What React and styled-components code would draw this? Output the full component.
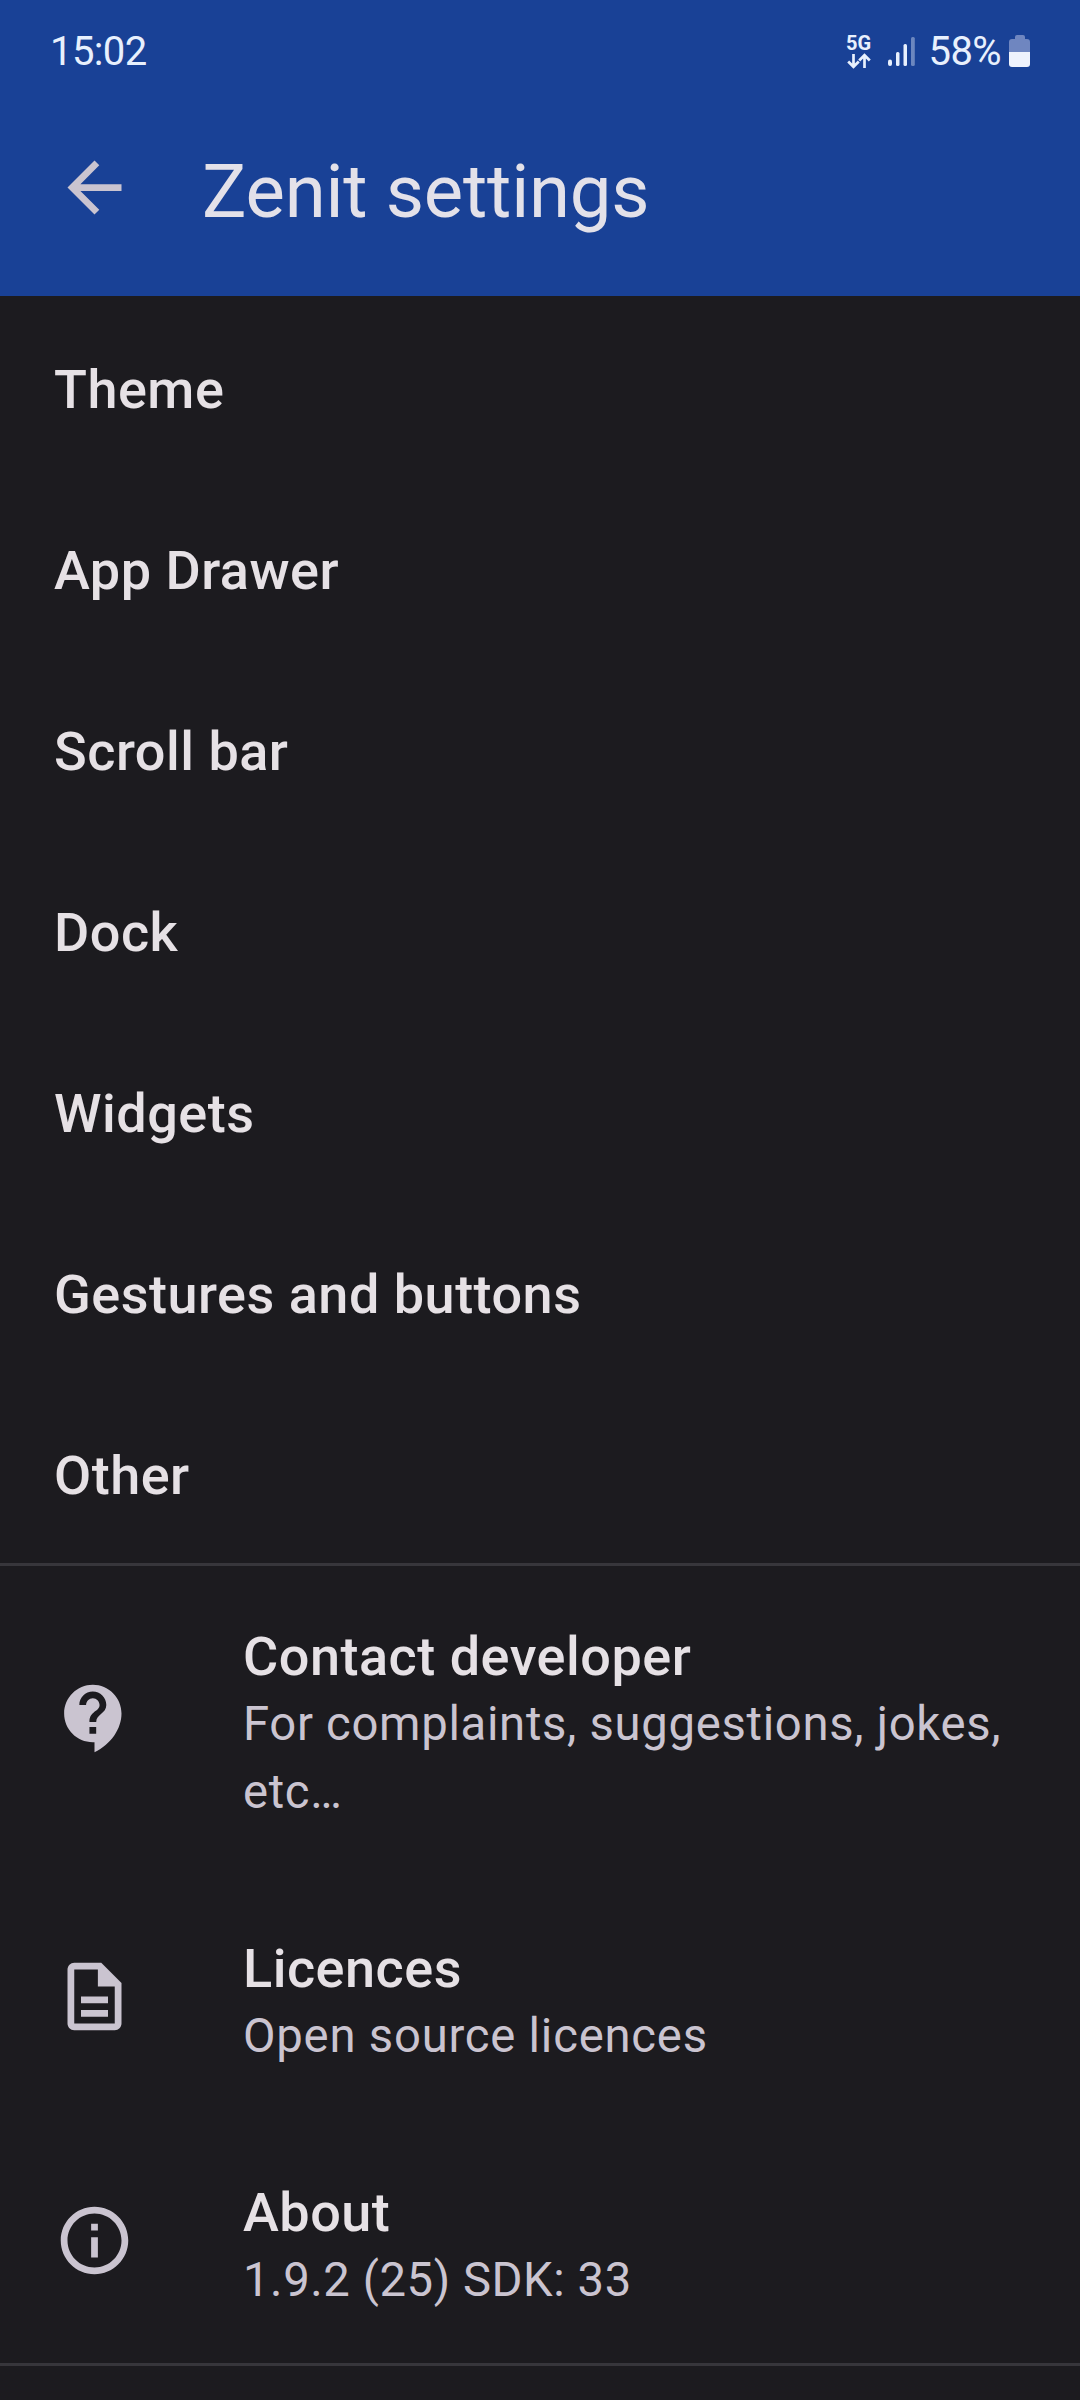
import React from "react";
import styled, { createGlobalStyle } from "styled-components";

const GlobalStyle = createGlobalStyle`
  * { box-sizing: border-box; }
  body {
    margin: 0;
    background: #1c1b1f;
    font-family: Roboto, "Noto Sans", sans-serif;
  }
`;

const Screen = styled.div`
  width: 1080px;
  height: 2400px;
  overflow: hidden;
  display: flex;
  flex-direction: column;
  background: #1c1b1f;
`;

const Header = styled.header`
  height: 296px;
  flex: none;
  background: #194196;
`;

const StatusBar = styled.div`
  height: 103px;
  display: flex;
  justify-content: space-between;
  align-items: center;
  padding: 0 49px 0 50px;
  color: #e8f0fd;
  font-size: 40px;
  line-height: 48px;
`;

const Clock = styled.span`
  letter-spacing: -0.6px;
`;

const StatusGroup = styled.div`
  display: flex;
  align-items: center;
`;

const Percent = styled.span`
  margin: 0 8px 0 13px;
  letter-spacing: -0.6px;
`;

const Network = styled.div`
  display: flex;
  flex-direction: column;
  align-items: center;
  gap: 2px;
  width: 26px;
  margin-right: 16px;
  font-size: 20px;
  font-weight: 700;
  line-height: 16px;
`;

const AppBar = styled.div`
  display: flex;
  align-items: center;
  height: 170px;
  padding-left: 54px;
`;

const Icon = styled.svg`
  width: 81px;
  height: 81px;
  flex: none;
  margin-top: -1px;
  fill: #cac4d0;
`;

const Heading = styled.h1`
  margin: 8px 0 0 67px;
  font-size: 74.25px;
  line-height: 94px;
  font-weight: 400;
  letter-spacing: -0.2px;
  color: #e3e1e9;
`;

const Row = styled.div`
  display: flex;
  align-items: center;
  flex: none;
  height: ${(p) => p.$height}px;
  padding: 0 54px;
`;

const RowText = styled.div`
  display: flex;
  flex-direction: column;
  padding-top: ${(p) => (p.$inset ? 10 : 5)}px;
  margin-left: ${(p) => (p.$inset ? 108 : 0)}px;
`;

const Title = styled.div`
  font-size: 54px;
  line-height: 69px;
  font-weight: 500;
  letter-spacing: 0.5px;
  color: #e6e1e5;
`;

const Summary = styled.div`
  font-size: 47.25px;
  line-height: 67.5px;
  letter-spacing: ${(p) => p.$tracking}px;
  color: #cac4d0;
`;

const Divider = styled.div`
  height: 3px;
  flex: none;
  margin-bottom: -3px;
  background: #37363b;
`;

const sections = ["Theme", "App Drawer", "Scroll bar", "Dock", "Widgets", "Gestures and buttons", "Other"];

const links = [
  {
    title: "Contact developer",
    summary: "For complaints, suggestions, jokes, etc…",
    height: 312,
    tracking: 0.68,
    icon: "M11.5 2C6.81 2 3 5.81 3 10.5S6.81 19 11.5 19h.5v3c4.86-2.34 8-7 8-11.5C20 5.81 16.19 2 11.5 2zm1 14.5h-2v-2h2v2zm0-3.5h-2c0-3.25 3-3 3-5 0-1.1-.9-2-2-2s-2 .9-2 2h-2c0-2.21 1.79-4 4-4s4 1.79 4 4c0 2.5-3 2.75-3 5z",
  },
  {
    title: "Licences",
    summary: "Open source licences",
    height: 244,
    tracking: 0.77,
    icon: "M8 16h8v2H8zm0-4h8v2H8zm6-10H6c-1.1 0-2 .9-2 2v16c0 1.1.89 2 1.99 2H18c1.1 0 2-.9 2-2V8l-6-6zm4 18H6V4h7v5h5v11z",
  },
  {
    title: "About",
    summary: "1.9.2 (25) SDK: 33",
    height: 244,
    tracking: 0.56,
    icon: "M11 7h2v2h-2zm0 4h2v6h-2zm1-9C6.48 2 2 6.48 2 12s4.48 10 10 10 10-4.48 10-10S17.52 2 12 2zm0 18c-4.41 0-8-3.59-8-8s3.59-8 8-8 8 3.59 8 8-3.59 8-8 8z",
  },
];

const DataArrows = () => (
  <svg width="24" height="16" viewBox="0 0 24 16" fill="none" stroke="#e8f0fd" strokeWidth="2.7">
    <path d="M6.5 1v12.5M1.2 8.5l5.3 5.3 5.3-5.3M17.5 15V2.5M12.2 7.5l5.3-5.3 5.3 5.3" />
  </svg>
);

const Signal = () => (
  <svg width="28" height="30" viewBox="0 0 28 30" fill="#e8f0fd">
    <rect x="0" y="22.5" width="4" height="6.5" rx="2" />
    <rect x="8" y="15" width="3.5" height="14" rx="1.5" />
    <rect x="15.5" y="7" width="3.5" height="22" rx="1.5" />
    <rect x="23" y="0" width="3.8" height="29" rx="1.5" opacity=".4" />
  </svg>
);

const Battery = () => (
  <svg width="22" height="33" viewBox="0 0 22 33">
    <path d="M0 17V7q0-3 3-3h3V2q0-2 2-2h6q2 0 2 2v2h2q3 0 3 3v10z" fill="#6f86c0" />
    <path d="M0 17h21v12q0 3-3 3H3q-3 0-3-3z" fill="#eef2fc" />
  </svg>
);

export default function App() {
  return (
    <Screen>
      <GlobalStyle />
      <Header>
        <StatusBar>
          <Clock>15:02</Clock>
          <StatusGroup>
            <Network>
              <span>5G</span>
              <DataArrows />
            </Network>
            <Signal />
            <Percent>58%</Percent>
            <Battery />
          </StatusGroup>
        </StatusBar>
        <AppBar>
          <Icon viewBox="0 0 24 24">
            <path d="M20 11H7.83l5.59-5.59L12 4l-8 8 8 8 1.41-1.41L7.83 13H20v-2z" />
          </Icon>
          <Heading>Zenit settings</Heading>
        </AppBar>
      </Header>
      {sections.map((name) => (
        <Row key={name} $height={181}>
          <RowText>
            <Title>{name}</Title>
          </RowText>
        </Row>
      ))}
      <Divider />
      {links.map((link) => (
        <Row key={link.title} $height={link.height}>
          <Icon viewBox="0 0 24 24">
            <path d={link.icon} />
          </Icon>
          <RowText $inset>
            <Title>{link.title}</Title>
            <Summary $tracking={link.tracking}>{link.summary}</Summary>
          </RowText>
        </Row>
      ))}
      <Divider />
    </Screen>
  );
}
